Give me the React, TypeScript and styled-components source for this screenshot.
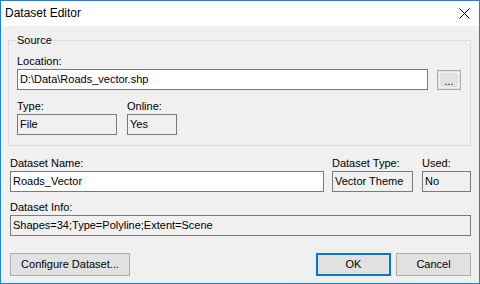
import React from 'react'
import styled, { createGlobalStyle } from 'styled-components'

const GlobalStyle = createGlobalStyle`
  html, body {
    margin: 0;
    padding: 0;
    background: #ffffff;
  }
  body {
    font-family: "Liberation Sans", Arial, sans-serif;
    font-size: 11px;
    color: #000000;
  }
  * {
    box-sizing: border-box;
  }
`

const Window = styled.div`
  width: 480px;
  height: 284px;
  border: 1px solid #1883d7;
  display: flex;
  flex-direction: column;
  background: #f0f0f0;
`

const TitleBar = styled.div`
  height: 25px;
  flex: none;
  background: #ffffff;
  display: flex;
  align-items: center;
  justify-content: space-between;
  padding: 0 9px 1px 4px;
  font-family: "Liberation Sans", Arial, sans-serif;
  font-size: 12px;
  color: #000000;
`

const CloseIcon = styled.svg`
  width: 11px;
  height: 11px;
  display: block;
`

const Body = styled.div`
  flex: 1;
  display: flex;
  flex-direction: column;
  padding: 14px 8px 0 8px;
`

const GroupBox = styled.div`
  position: relative;
  height: 106px;
  margin-left: -1px;
  border: 1px solid #dcdcdc;
  padding: 14px 9px 0 8px;
  display: flex;
  flex-direction: column;
`

const Legend = styled.span`
  position: absolute;
  top: -7px;
  left: 7px;
  padding: 0 1px;
  line-height: 13px;
  background: #f0f0f0;
`

const Label = styled.div<{ $top?: number }>`
  line-height: 13px;
  height: 13px;
  margin-top: ${({ $top }) => $top ?? 0}px;
  margin-bottom: 1px;
  white-space: nowrap;
`

const Row = styled.div`
  display: flex;
  align-items: flex-start;
  gap: 9px;
`

const TextBox = styled.div<{ $readOnly?: boolean }>`
  height: 21px;
  border: 1px solid #7a7a7a;
  background: ${({ $readOnly }) => ($readOnly ? '#f0f0f0' : '#ffffff')};
  padding: 0 2px;
  line-height: 19px;
  white-space: nowrap;
  overflow: hidden;
`

const BrowseButton = styled.div`
  width: 24px;
  height: 20px;
  flex: none;
  margin-top: 1px;
  border: 1px solid #adadad;
  background: #e1e1e1;
  outline: 1px dotted #ffffff;
  outline-offset: -3px;
  display: flex;
  align-items: flex-end;
  justify-content: center;
  font-size: 11px;
  line-height: 13px;
  padding-bottom: 1px;
`

const FieldGrid = styled.div<{ $cols: string; $gap?: string }>`
  display: grid;
  grid-template-columns: ${({ $cols }) => $cols};
  column-gap: ${({ $gap }) => $gap ?? '10px'};
  justify-content: start;
`

const Field = styled.div`
  display: flex;
  flex-direction: column;
`

const ButtonBar = styled.div`
  display: flex;
  align-items: center;
  margin-top: 17px;
  margin-left: 1px;
`

const Button = styled.div<{ $width: number; $default?: boolean }>`
  width: ${({ $width }) => $width}px;
  height: 23px;
  border: ${({ $default }) => ($default ? '2px solid #0078d7' : '1px solid #adadad')};
  background: #e1e1e1;
  display: flex;
  align-items: center;
  justify-content: center;
  white-space: nowrap;
  line-height: 13px;
`

const Spacer = styled.div`
  flex: 1;
`

const App = (): React.ReactElement => (
  <>
    <GlobalStyle />
    <Window>
      <TitleBar>
        <span>Dataset Editor</span>
        <CloseIcon viewBox="0 0 11 11">
          <path d="M0.5 0.5 L10.5 10.5 M10.5 0.5 L0.5 10.5" stroke="#000" strokeWidth="1" fill="none" />
        </CloseIcon>
      </TitleBar>
      <Body>
        <GroupBox>
          <Legend>Source</Legend>
          <Label>Location:</Label>
          <Row>
            <TextBox style={{ flex: 1 }}>D:\Data\Roads_vector.shp</TextBox>
            <BrowseButton>...</BrowseButton>
          </Row>
          <FieldGrid $cols="100px 50px">
            <Field>
              <Label $top={10}>Type:</Label>
              <TextBox $readOnly>File</TextBox>
            </Field>
            <Field>
              <Label $top={10}>Online:</Label>
              <TextBox $readOnly>Yes</TextBox>
            </Field>
          </FieldGrid>
        </GroupBox>
        <FieldGrid $cols="314px 81px 50px" $gap="8px" style={{ marginLeft: 1 }}>
          <Field>
            <Label $top={11}>Dataset Name:</Label>
            <TextBox>Roads_Vector</TextBox>
          </Field>
          <Field>
            <Label $top={11}>Dataset Type:</Label>
            <TextBox $readOnly>Vector Theme</TextBox>
          </Field>
          <Field style={{ marginLeft: 1 }}>
            <Label $top={11}>Used:</Label>
            <TextBox $readOnly>No</TextBox>
          </Field>
        </FieldGrid>
        <Field style={{ marginLeft: 1 }}>
          <Label $top={9}>Dataset Info:</Label>
          <TextBox $readOnly>Shapes=34;Type=Polyline;Extent=Scene</TextBox>
        </Field>
        <ButtonBar>
          <Button $width={120}>Configure Dataset...</Button>
          <Spacer />
          <Button $width={75} $default>OK</Button>
          <Button $width={75} style={{ marginLeft: 5 }}>Cancel</Button>
        </ButtonBar>
      </Body>
    </Window>
  </>
)

export default App
